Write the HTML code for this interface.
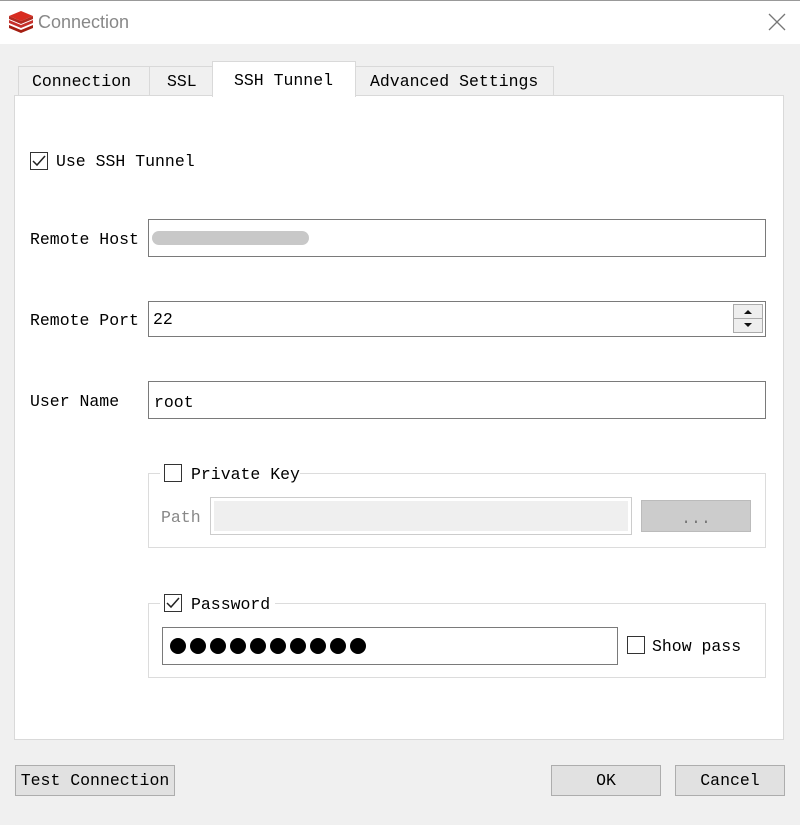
<!DOCTYPE html>
<html><head><style>
*{box-sizing:border-box;margin:0;padding:0}
body{width:800px;height:825px;background:#f0f0f0;position:relative;overflow:hidden;font-family:"Liberation Mono",monospace;font-size:16.5px;color:#000}
.a{position:absolute}
.t{line-height:20px;white-space:nowrap;margin-top:1px}
.in{position:absolute;background:#fff;border:1px solid #7a7a7a}
.cb{position:absolute;width:18px;height:18px;border:1px solid #333;background:#fff}
.btn{position:absolute;background:#e1e1e1;border:1px solid #adadad;text-align:center;line-height:30px}
.d{position:absolute;top:638px;width:16px;height:16px;border-radius:50%;background:#000}
</style></head><body>
<div class="a" style="left:0;top:0;width:800px;height:44px;background:#fff;border-top:1px solid #999"></div>
<svg class="a" style="left:8px;top:11px" width="26" height="22" viewBox="0 0 26 22"><path d="M1 14 L13 19 L25 14 L25 17 L13 22 L1 17Z" fill="#a41e11"/><path d="M1 9 L13 14 L25 9 L25 12 L13 17 L1 12Z" fill="#c6302b"/><path d="M1 5 L13 0 L25 5 L13 10Z" fill="#d82c20"/><path d="M1 5 L13 10 L25 5 L25 8 L13 13 L1 8Z" fill="#b22a20"/></svg>
<div class="a t" style="left:38px;top:11px;font-family:'Liberation Sans',sans-serif;font-size:18px;color:#888">Connection</div>
<svg class="a" style="left:768px;top:13px" width="18" height="18"><path d="M1 1L17 17M17 1L1 17" stroke="#777" stroke-width="1.3"/></svg>
<div class="a" style="left:18px;top:66px;width:132px;height:30px;background:#f0f0f0;border:1px solid #d9d9d9"></div>
<div class="a t" style="left:32px;top:71px">Connection</div>
<div class="a" style="left:149px;top:66px;width:64px;height:30px;border:1px solid #d9d9d9"></div>
<div class="a t" style="left:167px;top:71px">SSL</div>
<div class="a" style="left:355px;top:66px;width:199px;height:30px;border:1px solid #d9d9d9"></div>
<div class="a t" style="left:370px;top:71px">Advanced Settings</div>
<div class="a" style="left:14px;top:95px;width:770px;height:645px;background:#fff;border:1px solid #d9d9d9"></div>
<div class="a" style="left:212px;top:61px;width:144px;height:36px;background:#fff;border:1px solid #d9d9d9;border-bottom:none"></div>
<div class="a t" style="left:234px;top:70px">SSH Tunnel</div>
<div class="cb" style="left:30px;top:152px"></div>
<svg class="a" style="left:32px;top:155px" width="14" height="12"><path d="M1 6L5 10L13 1" stroke="#222" stroke-width="1.5" fill="none"/></svg>
<div class="a t" style="left:56px;top:151px">Use SSH Tunnel</div>
<div class="a t" style="left:30px;top:229px">Remote Host</div>
<div class="in" style="left:148px;top:219px;width:618px;height:38px"></div>
<div class="a" style="left:152px;top:231px;width:157px;height:14px;border-radius:7px;background:#c8c8c8"></div>
<div class="a t" style="left:30px;top:310px">Remote Port</div>
<div class="in" style="left:148px;top:301px;width:618px;height:36px"></div>
<div class="a t" style="left:153px;top:309px">22</div>
<div class="a" style="left:733px;top:304px;width:30px;height:29px;background:#eee;border:1px solid #aaa"></div>
<div class="a" style="left:734px;top:318px;width:28px;height:1px;background:#aaa"></div>
<svg class="a" style="left:742px;top:308px" width="12" height="22"><path d="M2 6L6 2L10 6Z M2 15L10 15L6 19Z" fill="#111"/></svg>
<div class="a t" style="left:30px;top:391px">User Name</div>
<div class="in" style="left:148px;top:381px;width:618px;height:38px"></div>
<div class="a t" style="left:154px;top:392px">root</div>
<div class="a" style="left:148px;top:473px;width:618px;height:75px;border:1px solid #dcdcdc"></div>
<div class="a" style="left:160px;top:462px;width:140px;height:22px;background:#fff"></div>
<div class="cb" style="left:164px;top:464px"></div>
<div class="a t" style="left:191px;top:464px">Private Key</div>
<div class="a t" style="left:161px;top:507px;color:#888">Path</div>
<div class="a" style="left:210px;top:497px;width:422px;height:38px;border:1px solid #ccc;background:#fff"></div>
<div class="a" style="left:214px;top:501px;width:414px;height:30px;background:#efefef"></div>
<div class="a" style="left:641px;top:500px;width:110px;height:32px;background:#ccc;border:1px solid #bbb;text-align:center;line-height:36px;color:#777">...</div>
<div class="a" style="left:148px;top:603px;width:618px;height:75px;border:1px solid #dcdcdc"></div>
<div class="a" style="left:160px;top:592px;width:115px;height:22px;background:#fff"></div>
<div class="cb" style="left:164px;top:594px"></div>
<svg class="a" style="left:166px;top:597px" width="14" height="12"><path d="M1 6L5 10L13 1" stroke="#222" stroke-width="1.5" fill="none"/></svg>
<div class="a t" style="left:191px;top:594px">Password</div>
<div class="in" style="left:162px;top:627px;width:456px;height:38px"></div>
<div class="d" style="left:170px"></div><div class="d" style="left:190px"></div><div class="d" style="left:210px"></div><div class="d" style="left:230px"></div><div class="d" style="left:250px"></div><div class="d" style="left:270px"></div><div class="d" style="left:290px"></div><div class="d" style="left:310px"></div><div class="d" style="left:330px"></div><div class="d" style="left:350px"></div>
<div class="cb" style="left:627px;top:636px"></div>
<div class="a t" style="left:652px;top:636px">Show pass</div>
<div class="btn" style="left:15px;top:765px;width:160px;height:31px">Test Connection</div>
<div class="btn" style="left:551px;top:765px;width:110px;height:31px">OK</div>
<div class="btn" style="left:675px;top:765px;width:110px;height:31px">Cancel</div>
</body></html>
